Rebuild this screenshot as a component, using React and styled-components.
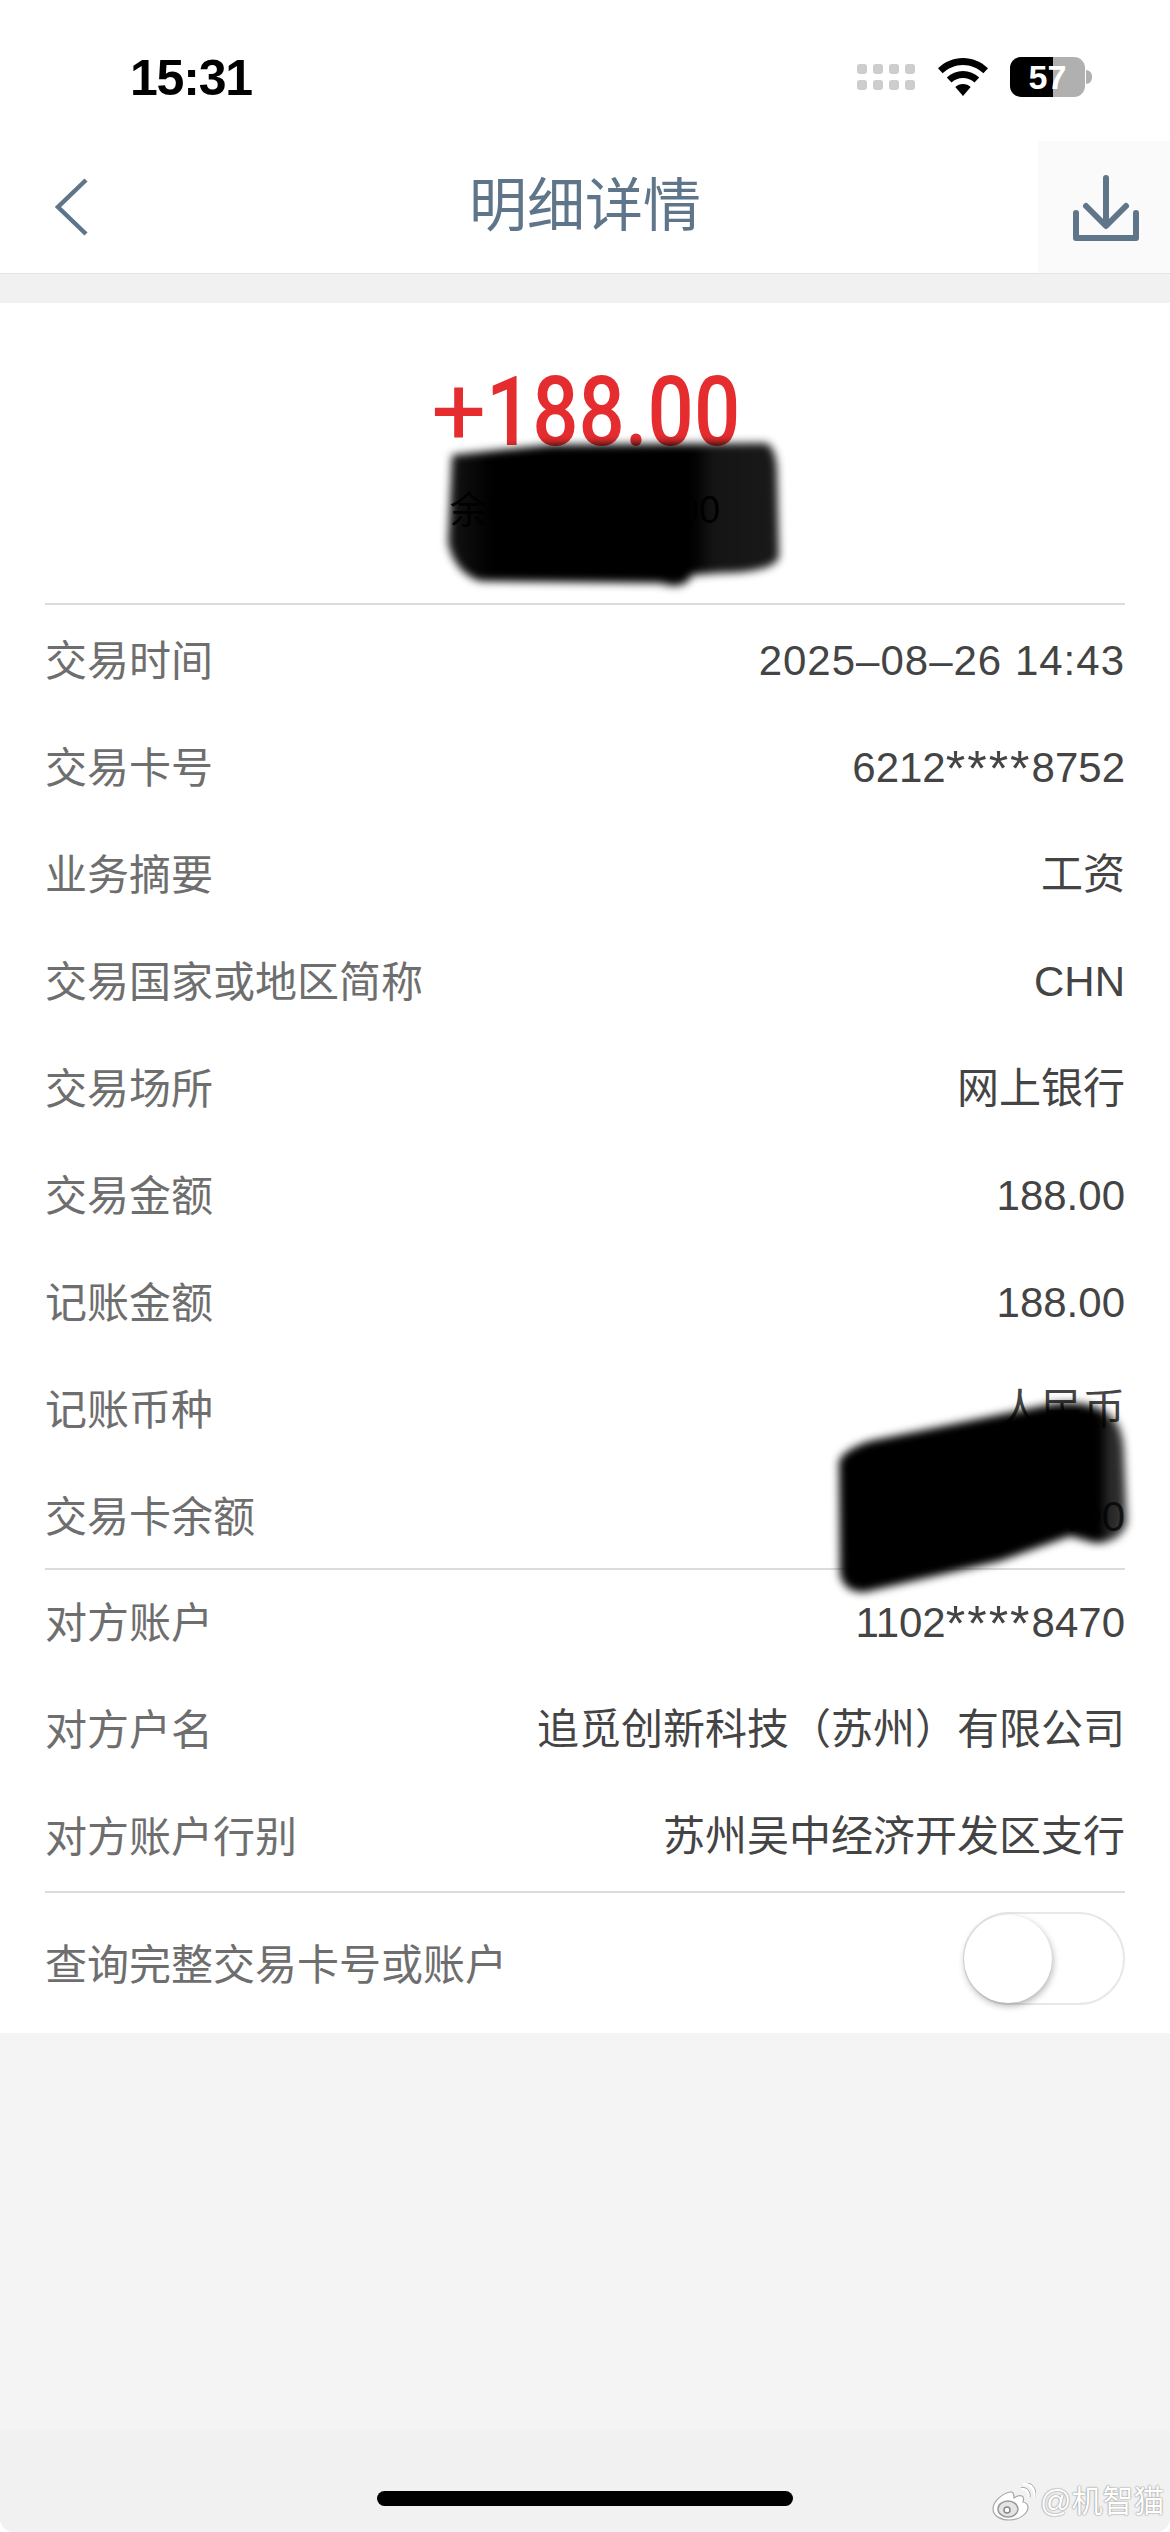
import React from "react";
import styled, { createGlobalStyle } from "styled-components";

const Global = createGlobalStyle`
  html, body { margin: 0; padding: 0; background: #fff; }
  * { box-sizing: border-box; }
  body { font-family: "Liberation Sans", "Noto Sans CJK SC", sans-serif; }
`;

const Page = styled.div`
  position: relative;
  width: 1170px;
  height: 2532px;
  display: flex;
  flex-direction: column;
  background: #f4f4f4;
  overflow: hidden;
  border-radius: 0 0 14px 14px;
`;

const StatusBar = styled.div`
  height: 141px;
  background: #fff;
  padding: 0 85px 0 130px;
  display: flex;
  justify-content: space-between;
  align-items: flex-start;
`;

const Time = styled.div`
  margin-top: 49px;
  font-size: 50px;
  line-height: 58px;
  font-weight: 700;
  letter-spacing: -1.2px;
  color: #000;
`;

const StatusIcons = styled.div`
  margin-top: 57px;
  display: flex;
  align-items: center;
`;

const Dots = styled.div`
  display: grid;
  grid-template-columns: repeat(4, 10px);
  grid-auto-rows: 10px;
  gap: 6px;
  margin-right: 23px;
`;

const Dot = styled.i`
  display: block;
  border-radius: 3px;
  background: #cdcdcd;
`;

const Battery = styled.div`
  position: relative;
  margin-left: 22px;
  width: 75px;
  height: 40px;
  border-radius: 11px;
  background: linear-gradient(90deg, #000 0 43px, #b0b0b0 43px);
  color: #fff;
  font-size: 34px;
  font-weight: 700;
  line-height: 40px;
  text-align: center;
  &::after {
    content: "";
    position: absolute;
    left: 76px;
    top: 13px;
    width: 6px;
    height: 14px;
    border-radius: 0 7px 7px 0;
    background: #b0b0b0;
  }
`;

const NavBar = styled.div`
  height: 133px;
  background: #fff;
  border-bottom: 1px solid #e4e4e4;
  display: grid;
  grid-template-columns: 132px 1fr 132px;
  align-items: center;
`;

const BackButton = styled.div`
  height: 132px;
  padding: 36px 0 0 54px;
`;

const Title = styled.div`
  text-align: center;
  font-size: 58px;
  line-height: 80px;
  margin-top: -2px;
  color: #5f7589;
`;

const DownloadButton = styled.div`
  height: 132px;
  background: #fafafa;
  padding: 32px 0 0 34px;
`;

const Band = styled.div`
  height: 29px;
  background: #f1f1f1;
`;

const Card = styled.div`
  position: relative;
  height: 1730px;
  background: #fff;
  padding: 0 45px;
`;

const Hero = styled.div`
  height: 300px;
  padding-top: 54px;
  display: flex;
  flex-direction: column;
  align-items: center;
  text-align: center;
`;

const Amount = styled.div`
  display: flex;
  font-family: Roboto, "Liberation Sans", sans-serif;
  font-size: 97px;
  line-height: 110px;
  color: #e52d2f;
`;

const PlusSign = styled.span`
  font-weight: 400;
`;

const AmountDigits = styled.span`
  display: inline-block;
  font-weight: 500;
  margin-right: -50px;
  transform: scaleX(0.84);
  transform-origin: left center;
`;

const Balance = styled.div`
  margin-top: 18px;
  font-size: 38px;
  line-height: 50px;
  color: #111;
`;

const Section = styled.div`
  border-top: 2px solid #dcdcdc;
`;

const LiftedRows = styled.div`
  margin: -3px 0 3px;
`;

const Row = styled.div`
  height: ${(p) => p.$h || 107}px;
  display: flex;
  justify-content: space-between;
  align-items: center;
  font-size: 42px;
`;

const Label = styled.span`
  color: #6e6e6e;
  margin-top: -3px;
`;

const Value = styled.span`
  color: #444;
  line-height: 50px;
  letter-spacing: ${(p) => (p.$spaced ? 1 : 0)}px;
  margin-top: 5px;
`;

const Stars = styled.span`
  font-size: 50px;
  line-height: 0;
  letter-spacing: 2px;
  vertical-align: -4px;
`;

const Toggle = styled.div`
  position: relative;
  width: 162px;
  height: 93px;
  margin-top: -10px;
  border-radius: 47px;
  border: 2px solid #e8e8e8;
  background: #fff;
`;

const Thumb = styled.div`
  position: absolute;
  left: -1px;
  top: 1px;
  width: 88px;
  height: 88px;
  border-radius: 50%;
  background: #fff;
  box-shadow: 1px 3px 7px rgba(0, 0, 0, 0.3);
`;

const Redaction = styled.svg`
  position: absolute;
  left: ${(p) => p.$left}px;
  top: ${(p) => p.$top}px;
  pointer-events: none;
`;

const Filler = styled.div`
  flex: 1;
`;

const BottomArea = styled.div`
  height: 102px;
  padding-top: 61px;
  background: #f1f1f1;
  display: flex;
  justify-content: center;
`;

const HomeBar = styled.div`
  width: 416px;
  height: 15px;
  border-radius: 8px;
  background: #000;
`;

const Watermark = styled.div`
  position: absolute;
  left: 992px;
  top: 2482px;
  display: flex;
  align-items: center;
  gap: 4px;
  font-size: 31px;
  line-height: 40px;
  color: #fff;
  text-shadow: 0 0 2px #8c8c8c, 0 0 1px #8c8c8c;
`;

const rows1 = [
  ["交易时间", "2025–08–26 14:43", true],
  ["交易卡号", <>6212<Stars>****</Stars>8752</>],
  ["业务摘要", "工资"],
  ["交易国家或地区简称", "CHN"],
  ["交易场所", "网上银行"],
  ["交易金额", "188.00"],
  ["记账金额", "188.00"],
  ["记账币种", "人民币"],
  ["交易卡余额", "****.00"],
];

const rows2 = [
  ["对方账户", <>1102<Stars>****</Stars>8470</>],
  ["对方户名", "追觅创新科技（苏州）有限公司"],
  ["对方账户行别", "苏州吴中经济开发区支行"],
];

function Wifi() {
  return (
    <svg width="50" height="38" viewBox="0 0 50 38">
      <path d="M25 0C15.5 0 7 3.6 0 10.3l4.6 5C10.4 10 17.3 7 25 7s14.6 3 20.4 8.3l4.6-5C43 3.6 34.5 0 25 0z" fill="#000" />
      <path d="M25 13c-6.2 0-11.8 2.3-16.2 6.4l4.7 5.1C16.6 21.7 20.6 20 25 20s8.4 1.7 11.5 4.5l4.7-5.1C36.8 15.3 31.2 13 25 13z" fill="#000" />
      <path d="M25 26c-3 0-5.7 1.1-7.7 3L25 38l7.7-9c-2-1.9-4.7-3-7.7-3z" fill="#000" />
    </svg>
  );
}

function WeiboLogo() {
  return (
    <svg width="44" height="38" viewBox="0 0 44 38">
      <path d="M18 9C9 11 1 19 1 26c0 7 8 11 16 11 10 0 19-6 19-13 0-3-3-5-5-5 1-3 1-5-1-6-2-1-5 0-8 2 0-4-1-7-4-6z" fill="#fff" stroke="#a8a8a8" strokeWidth="1.2" />
      <ellipse cx="16" cy="26" rx="10" ry="8" fill="#e4e4e4" stroke="#999" strokeWidth="1.5" />
      <circle cx="15" cy="27" r="3" fill="#fff" stroke="#888" strokeWidth="1.5" />
      <path d="M29 6c5-1 9 3 8 9M31 1c8-1 13 6 12 14" fill="none" stroke="#fff" strokeWidth="2.5" />
      <path d="M29 4.5c6-1 10 4 9 10M31-0.5c9-1 14 6 13 15" fill="none" stroke="#a8a8a8" strokeWidth="1" />
    </svg>
  );
}

export default function App() {
  return (
    <>
      <Global />
      <Page>
        <StatusBar>
          <Time>15:31</Time>
          <StatusIcons>
            <Dots>
              {Array.from({ length: 8 }).map((_, i) => (
                <Dot key={i} />
              ))}
            </Dots>
            <Wifi />
            <Battery>57</Battery>
          </StatusIcons>
        </StatusBar>

        <NavBar>
          <BackButton>
            <svg width="36" height="60" viewBox="0 0 36 60">
              <path d="M32 3 L4 30 L32 57" fill="none" stroke="#5f7589" strokeWidth="4.5" />
            </svg>
          </BackButton>
          <Title>明细详情</Title>
          <DownloadButton>
            <svg width="68" height="70" viewBox="0 0 68 70">
              <g fill="none" stroke="#5f7589" strokeWidth="6" strokeLinecap="round" strokeLinejoin="round">
                <path d="M34 5V52" />
                <path d="M14 33L34 53L54 33" />
                <path d="M4 40V65H64V40" />
              </g>
            </svg>
          </DownloadButton>
        </NavBar>

        <Band />

        <Card>
          <Hero>
            <Amount>
              <PlusSign>+</PlusSign>
              <AmountDigits>188.00</AmountDigits>
            </Amount>
            <Balance>余额：*******.00</Balance>
          </Hero>
          <Section>
            {rows1.map(([k, v, spaced]) => (
              <Row key={k}>
                <Label>{k}</Label>
                <Value $spaced={spaced}>{v}</Value>
              </Row>
            ))}
          </Section>
          <Section>
            <LiftedRows>
              {rows2.map(([k, v]) => (
                <Row key={k}>
                  <Label>{k}</Label>
                  <Value>{v}</Value>
                </Row>
              ))}
            </LiftedRows>
          </Section>
          <Section>
            <Row $h={140}>
              <Label>查询完整交易卡号或账户</Label>
              <Toggle>
                <Thumb />
              </Toggle>
            </Row>
          </Section>

          <Redaction $left={430} $top={120} width="370" height="180" viewBox="0 0 370 180">
            <defs>
              <filter id="blurA"><feGaussianBlur stdDeviation="4" /></filter>
              <linearGradient id="inkA">
                <stop offset="0" stopColor="#000" stopOpacity="0.92" />
                <stop offset="0.13" stopColor="#000" stopOpacity="1" />
                <stop offset="0.74" stopColor="#000" stopOpacity="1" />
                <stop offset="0.8" stopColor="#000" stopOpacity="0.92" />
                <stop offset="1" stopColor="#000" stopOpacity="0.9" />
              </linearGradient>
            </defs>
            <path
              d="M22 32 L120 22 L335 20 Q345 22 347 45 L349 135 Q340 150 290 150 L262 152 Q255 168 230 160 L50 158 Q25 150 18 120 Z"
              fill="url(#inkA)"
              filter="url(#blurA)"
            />
          </Redaction>

          <Redaction $left={820} $top={1090} width="330" height="220" viewBox="0 0 330 220">
            <defs>
              <filter id="blurB"><feGaussianBlur stdDeviation="4" /></filter>
              <linearGradient id="inkB">
                <stop offset="0" stopColor="#000" stopOpacity="1" />
                <stop offset="0.91" stopColor="#000" stopOpacity="1" />
                <stop offset="0.93" stopColor="#000" stopOpacity="0.85" />
                <stop offset="1" stopColor="#000" stopOpacity="0.8" />
              </linearGradient>
            </defs>
            <path
              d="M19 68 Q25 56 50 48 L227 12 Q270 5 292 24 Q303 34 304 60 L307 130 Q300 150 275 150 L250 143 L180 168 L45 199 Q25 200 20 182 Z"
              fill="url(#inkB)"
              filter="url(#blurB)"
            />
          </Redaction>
        </Card>

        <Filler />
        <BottomArea>
          <HomeBar />
        </BottomArea>

        <Watermark>
          <WeiboLogo />
          <span>@机智猫</span>
        </Watermark>
      </Page>
    </>
  );
}
